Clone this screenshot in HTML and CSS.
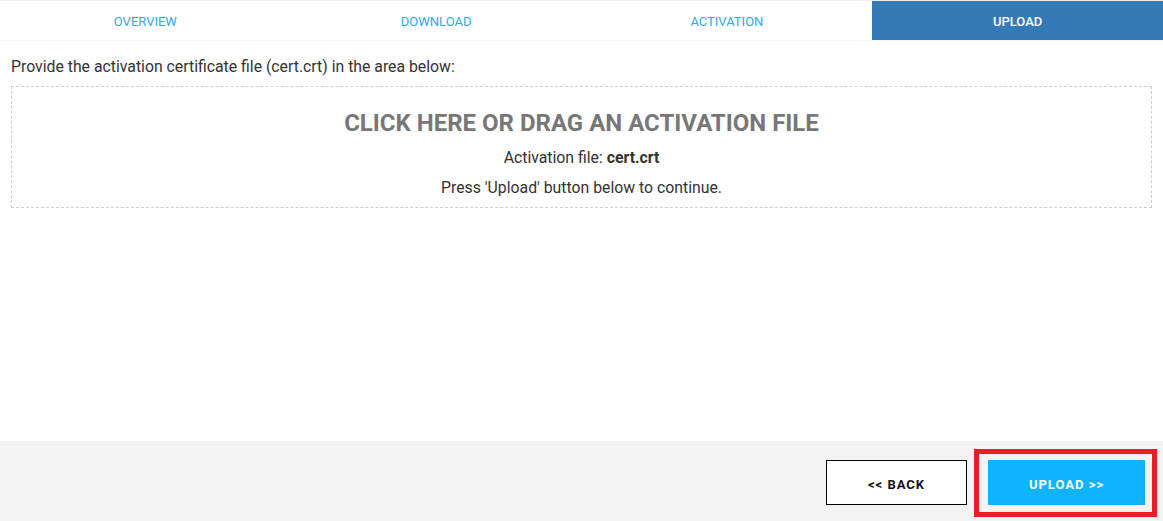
FILE: index.html
```html
<!DOCTYPE html>
<html>
<head>
<meta charset="utf-8">
<link rel="stylesheet" href="styles.css">
</head>
<body>
<div class="page">
  <nav class="tabs">
    <div class="tab">OVERVIEW</div>
    <div class="tab">DOWNLOAD</div>
    <div class="tab">ACTIVATION</div>
    <div class="tab active">UPLOAD</div>
  </nav>
  <main class="content">
    <p class="intro">Provide the activation certificate file (cert.crt) in the area below:</p>
    <div class="dropzone">
      <div class="drop-title">CLICK HERE OR DRAG AN ACTIVATION FILE</div>
      <div class="drop-file">Activation file: <b>cert.crt</b></div>
      <div class="drop-hint">Press 'Upload' button below to continue.</div>
    </div>
  </main>
  <footer class="footer">
    <button class="btn btn-back">&lt;&lt; BACK</button>
    <div class="highlight-wrap">
      <button class="btn btn-upload">UPLOAD &gt;&gt;</button>
      <div class="highlight"></div>
    </div>
  </footer>
</div>
</body>
</html>
```
FILE: styles.css
```css
* { box-sizing: border-box; }
html, body {
  margin: 0;
  padding: 0;
  background: #fff;
  font-family: Roboto, "Liberation Sans", Arial, sans-serif;
}
.page {
  width: 1163px;
  height: 521px;
  display: flex;
  flex-direction: column;
  border-top: 1px solid #ececec;
}
.tabs {
  display: grid;
  grid-template-columns: repeat(4, 1fr);
  height: 40px;
  border-bottom: 1px solid #f6f6f6;
}
.tab {
  display: flex;
  align-items: center;
  justify-content: center;
  padding-top: 2px;
  font-size: 13px;
  color: #31a9f2;
}
.tab.active {
  background: #337ab7;
  color: #fff;
  font-weight: 500;
}
.content {
  flex: 1;
  padding: 0 11px 0 11px;
}
.intro {
  margin: 17px 0 0 0;
  font-size: 15.8px;
  line-height: 18px;
  color: #333;
}
.dropzone {
  margin-top: 10px;
  height: 122px;
  border: 1px dashed #cfcfcf;
  display: flex;
  flex-direction: column;
  align-items: center;
  padding-top: 23px;
  color: #333;
}
.drop-title {
  font-size: 24px;
  line-height: 26px;
  font-weight: 700;
  color: #777;
}
.drop-file {
  margin-top: 13px;
  font-size: 15.8px;
  line-height: 18px;
}
.drop-file b { font-weight: 700; }
.drop-hint {
  margin-top: 12px;
  font-size: 15.8px;
  line-height: 18px;
}
.footer {
  height: 80px;
  background: #f3f3f3;
  display: flex;
  justify-content: flex-end;
  align-items: flex-start;
  padding: 19px 18px 0 0;
  gap: 21px;
}
.btn {
  height: 45px;
  padding: 3px 0 0 0;
  font-family: Roboto, "Liberation Sans", Arial, sans-serif;
  font-size: 13px;
  font-weight: 700;
  letter-spacing: 1px;
  cursor: pointer;
}
.btn-back {
  width: 141px;
  background: #fff;
  border: 1px solid #000;
  color: #111;
}
.btn-upload {
  width: 157px;
  background: #0fb4ff;
  border: none;
  color: #fff;
}
.highlight-wrap {
  position: relative;
}
.highlight {
  position: absolute;
  left: -14px;
  top: -11px;
  width: 183px;
  height: 68px;
  border: 5px solid #ed1c24;
  pointer-events: none;
}
```
